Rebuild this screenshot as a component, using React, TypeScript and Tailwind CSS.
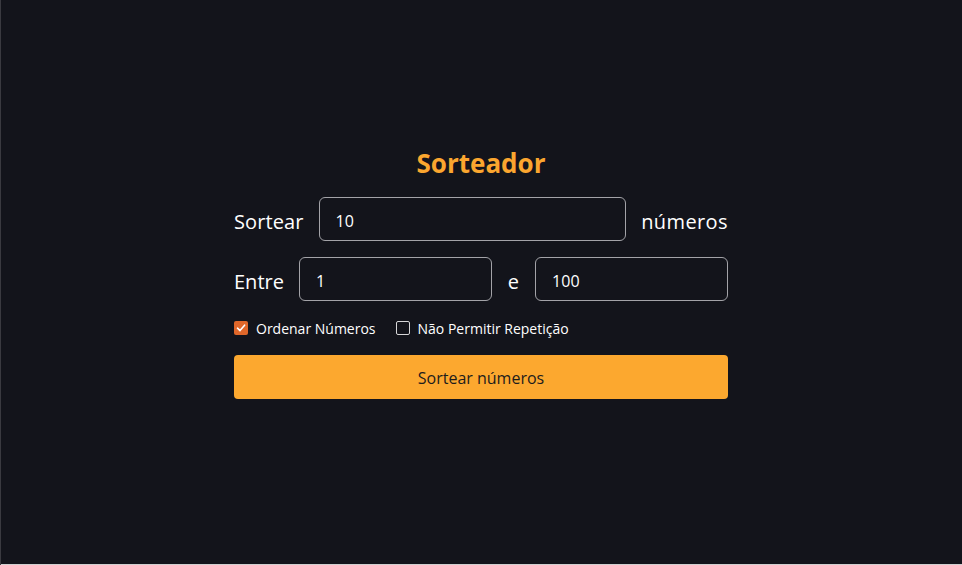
import React from "react";

export default function App() {
  return (
    <div
      className="h-[565px] w-full bg-[#13141b] shadow-[inset_1px_0_0_#3a3a40,inset_0_-1px_0_#d0d0d0] overflow-hidden"
      style={{ fontFamily: '"Open Sans", "Noto Sans", sans-serif' }}
    >
      <div className="mx-auto w-[494px] pt-[145px] flex flex-col">
        <h1 className="text-center text-[26px] leading-[36px] font-bold text-[#fba62f]">Sorteador</h1>
        <div className="mt-[16px] flex items-center gap-[15px]">
          <span className="text-[20px] text-white pt-[5px] tracking-[0.1px]">Sortear</span>
          <div className="flex-1 h-[44px] rounded-[6px] border border-[#a3a3a8] flex items-center px-[16px] pt-[4px] text-[16px] text-white">10</div>
          <span className="text-[20px] text-white pt-[5px] tracking-[0.4px]">números</span>
        </div>
        <div className="mt-[16px] flex items-center gap-[15px]">
          <span className="text-[20px] text-white pt-[5px]">Entre</span>
          <div className="flex-1 h-[44px] rounded-[6px] border border-[#a3a3a8] flex items-center px-[16px] pt-[4px] text-[16px] text-white">1</div>
          <span className="text-[20px] text-white px-[1px] pt-[5px]">e</span>
          <div className="flex-1 h-[44px] rounded-[6px] border border-[#a3a3a8] flex items-center px-[16px] pt-[4px] text-[16px] text-white">100</div>
        </div>
        <div className="mt-[16px] h-[22px] flex items-center gap-[20px] text-[14px] text-white">
          <label className="flex items-center gap-[8px]">
            <span className="w-[14px] h-[14px] rounded-[2px] bg-[#e0672a] flex items-center justify-center">
              <svg width="10" height="10" viewBox="0 0 10 10" fill="none">
                <path d="M1.5 5.2 L4 7.6 L8.6 2.2" stroke="white" strokeWidth="1.6" strokeLinecap="round" strokeLinejoin="round" />
              </svg>
            </span>
            <span className="pt-[1px]">Ordenar Números</span>
          </label>
          <label className="flex items-center gap-[8px]">
            <span className="w-[14px] h-[14px] rounded-[2px] border-[1.5px] border-[#d6d6d8]" />
            <span className="pt-[1px]">Não Permitir Repetição</span>
          </label>
        </div>
        <div className="mt-[16px] h-[44px] rounded-[4px] bg-[#fca82f] flex items-center justify-center pt-[1px] text-[16px] text-[#1c1c1c]">
          Sortear números
        </div>
      </div>
    </div>
  );
}
